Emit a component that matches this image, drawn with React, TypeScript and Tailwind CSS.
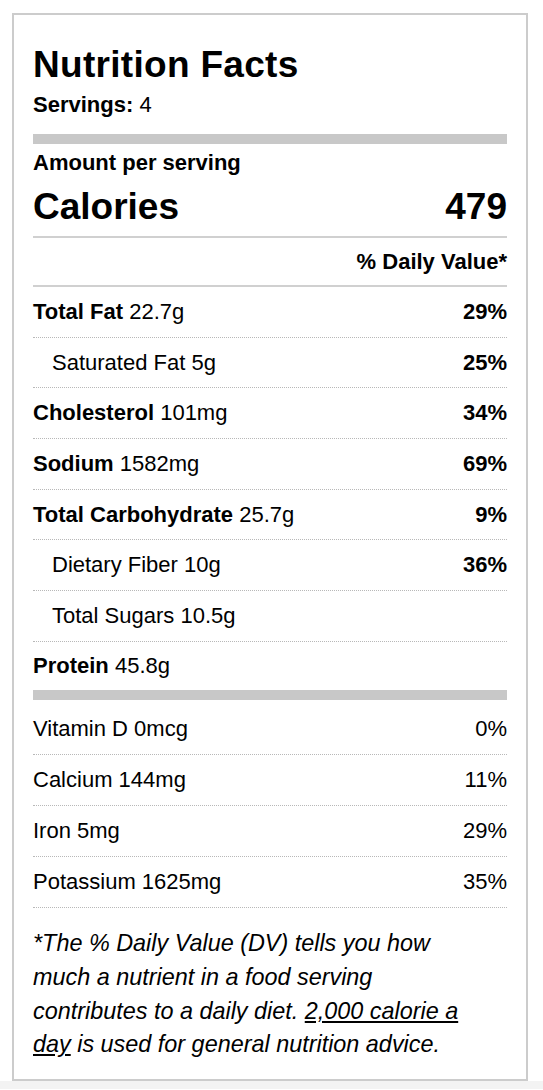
import React from "react";

type Row = { name: string; amount: string; dv?: string; bold?: boolean; indent?: boolean };

const main: Row[] = [
  { name: "Total Fat", amount: "22.7g", dv: "29%", bold: true },
  { name: "Saturated Fat", amount: "5g", dv: "25%", indent: true },
  { name: "Cholesterol", amount: "101mg", dv: "34%", bold: true },
  { name: "Sodium", amount: "1582mg", dv: "69%", bold: true },
  { name: "Total Carbohydrate", amount: "25.7g", dv: "9%", bold: true },
  { name: "Dietary Fiber", amount: "10g", dv: "36%", indent: true },
  { name: "Total Sugars", amount: "10.5g", indent: true },
];

const minerals: Row[] = [
  { name: "Vitamin D", amount: "0mcg", dv: "0%" },
  { name: "Calcium", amount: "144mg", dv: "11%" },
  { name: "Iron", amount: "5mg", dv: "29%" },
  { name: "Potassium", amount: "1625mg", dv: "35%" },
];

export default function App() {
  return (
    <div
      className="w-[543px] h-[1090px] bg-white text-black"
      style={{ fontFamily: '"Liberation Sans", Arial, Helvetica, sans-serif' }}
    >
      <div className="pt-[13px] pl-[12px]">
        <div className="w-[516px] border-2 border-[#cccccc] px-[19px] pt-[29px] pb-[17px]">
          <h1 className="text-[37px] leading-[42px] font-bold tracking-[0.3px]">Nutrition Facts</h1>
          <div className="text-[22px] leading-[26px] mt-[6px]">
            <span className="font-bold">Servings:</span> 4
          </div>
          <div className="h-[10px] bg-[#c8c8c8] mt-[16px]" />
          <div className="text-[22px] leading-[26px] font-bold mt-[6px]">Amount per serving</div>
          <div className="flex justify-between items-baseline text-[37px] leading-[42px] font-bold mt-[10px] pb-[8px] border-b-2 border-[#d0d0d0]">
            <span>Calories</span>
            <span>479</span>
          </div>
          <div className="text-right text-[22px] leading-[26px] font-bold pt-[11px] pb-[10px] border-b-2 border-[#d0d0d0]">
            % Daily Value*
          </div>
          {main.map((r) => (
            <div
              key={r.name}
              className={`flex justify-between text-[22px] leading-[26px] py-[11.85px] border-b border-dotted border-[#b8b8b8] ${r.indent ? "pl-[19px]" : ""}`}
            >
              <span>
                {r.bold ? <span className="font-bold">{r.name}</span> : r.name} {r.amount}
              </span>
              {r.dv ? <span className="font-bold">{r.dv}</span> : null}
            </div>
          ))}
          <div className="flex justify-between text-[22px] leading-[26px] pt-[11.5px] pb-[11px]">
            <span>
              <span className="font-bold">Protein</span> 45.8g
            </span>
          </div>
          <div className="h-[10px] bg-[#c8c8c8]" />
          <div className="mt-[4px]">
            {minerals.map((r) => (
              <div
                key={r.name}
                className="flex justify-between text-[22px] leading-[26px] py-[12px] border-b border-dotted border-[#b8b8b8]"
              >
                <span>
                  {r.name} {r.amount}
                </span>
                <span>{r.dv}</span>
              </div>
            ))}
          </div>
          <p className="italic text-[23.4px] leading-[33.7px] mt-[19px]">
            <span className="block whitespace-nowrap">*The % Daily Value (DV) tells you how</span>
            <span className="block whitespace-nowrap">much a nutrient in a food serving</span>
            <span className="block whitespace-nowrap">
              contributes to a daily diet. <span className="underline">2,000 calorie a</span>
            </span>
            <span className="block whitespace-nowrap">
              <span className="underline">day</span> is used for general nutrition advice.
            </span>
          </p>
        </div>
      </div>
      <div className="h-[8px] bg-[#f3f3f3]" />
    </div>
  );
}
